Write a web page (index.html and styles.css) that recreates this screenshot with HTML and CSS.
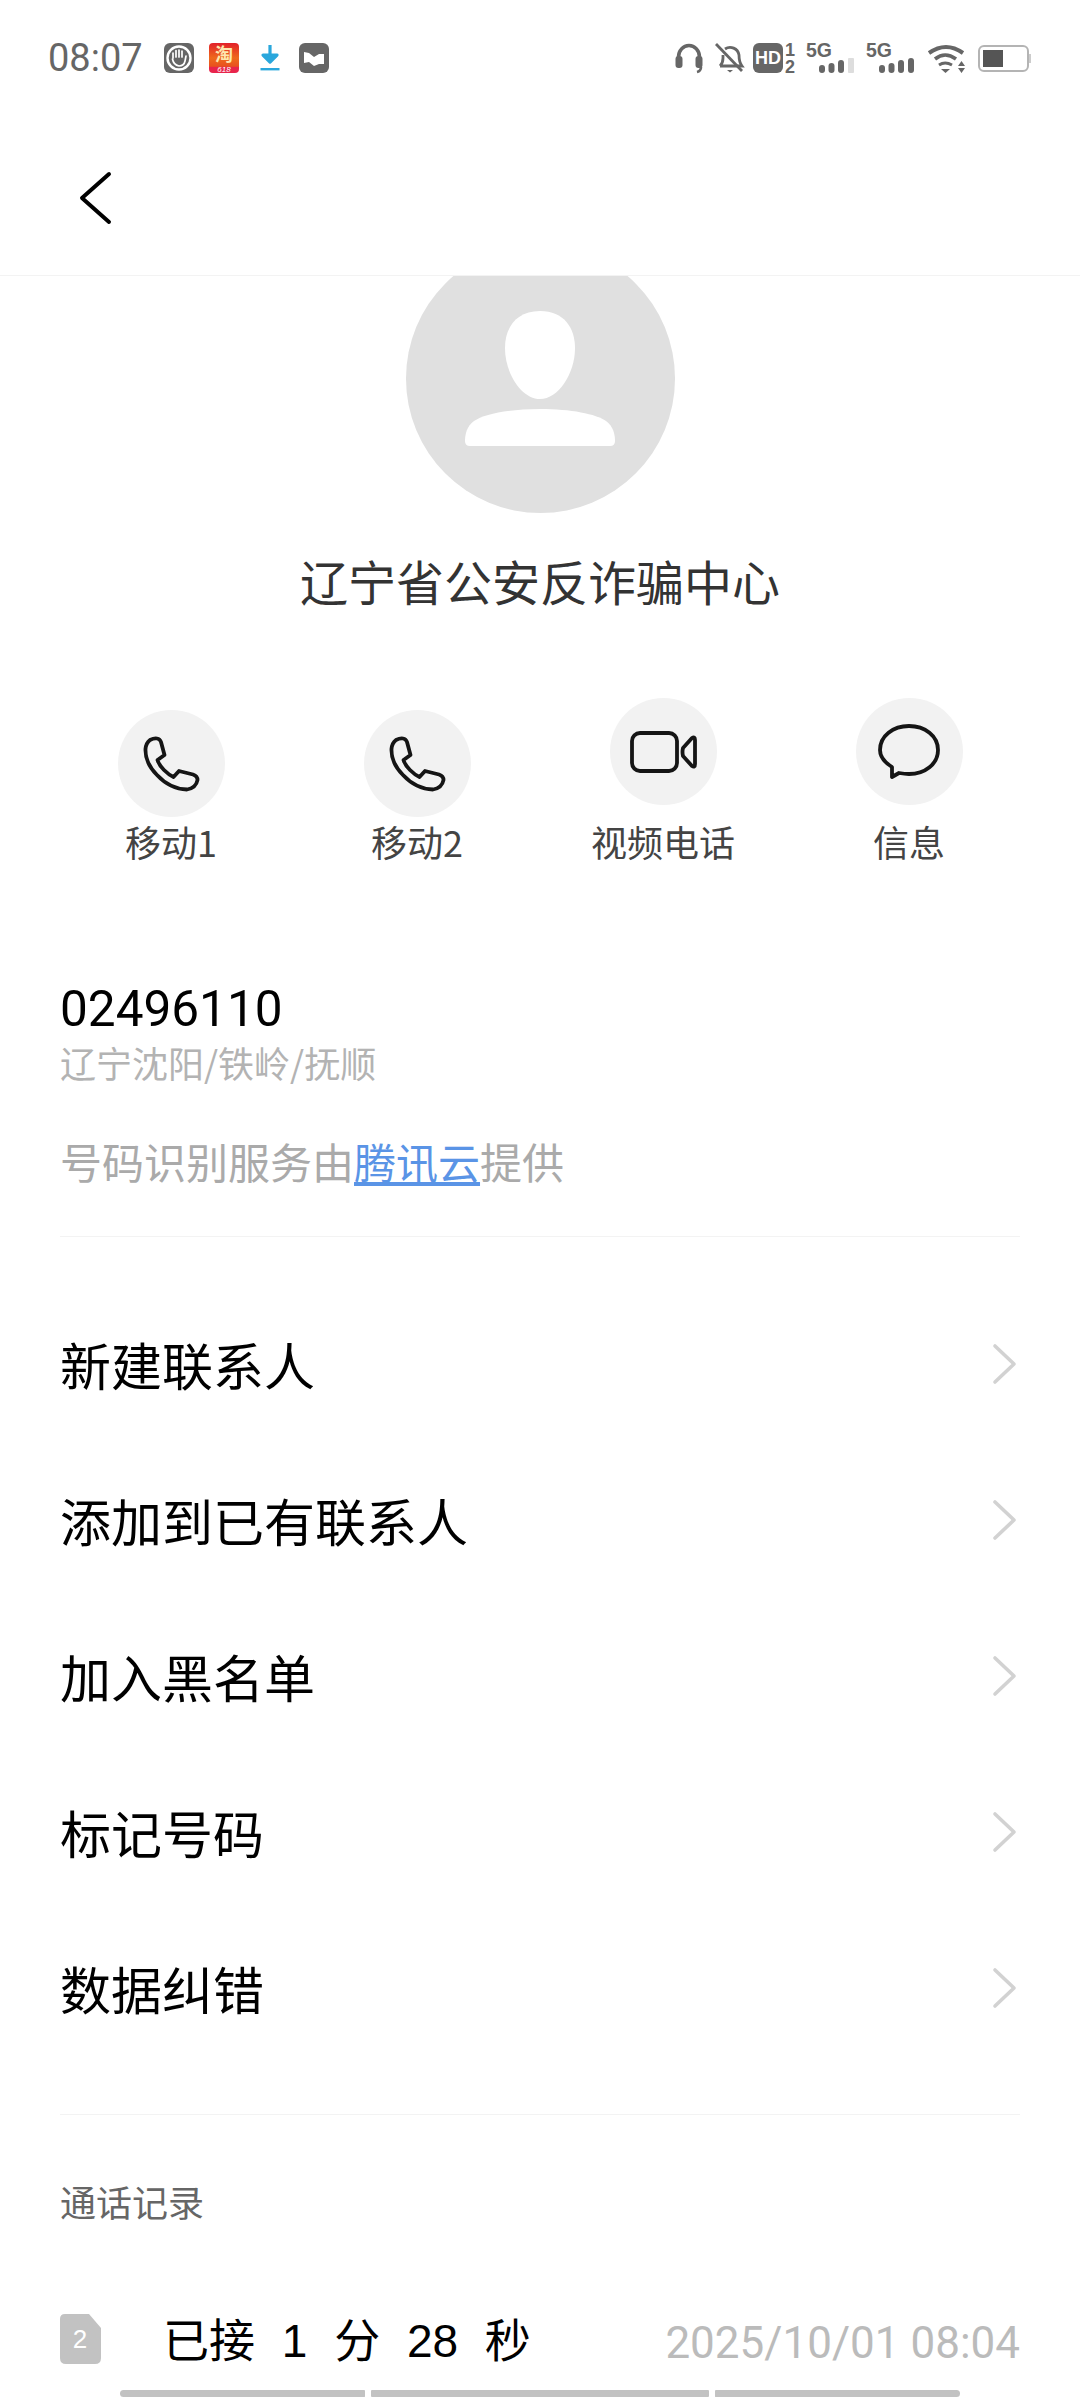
FILE: index.html
```html
<!DOCTYPE html>
<html lang="zh-CN">
<head>
<meta charset="utf-8">
<title>辽宁省公安反诈骗中心</title>
<link rel="stylesheet" href="styles.css">
</head>
<body>
<div class="page">
  <header class="top">
    <div class="status">
      <div class="status-left">
        <span class="time">08:07</span>
        <svg class="si si-a" viewBox="0 0 30 30"><rect width="30" height="30" rx="6" fill="#666"/><circle cx="15" cy="15" r="11.5" fill="none" stroke="#fff" stroke-width="2.4"/><path d="M9 15V10M12 14V7.5M15 14V7M18 14V8M8.5 16q1 6 6.5 7q5 0 6-5l1-5" fill="none" stroke="#fff" stroke-width="1.7" stroke-linecap="round"/></svg>
        <svg class="si si-b" viewBox="0 0 30 30"><defs><linearGradient id="tb" x1="0" y1="0" x2="0" y2="1"><stop offset="0" stop-color="#e2202a"/><stop offset=".5" stop-color="#ee6a1c"/><stop offset=".78" stop-color="#e8501f"/><stop offset=".8" stop-color="#e8244c"/><stop offset="1" stop-color="#e8244c"/></linearGradient></defs><rect width="30" height="30" rx="4" fill="url(#tb)"/><text x="15" y="18" class="tb-main">淘</text><text x="15" y="28.500" class="tb-sub">618</text></svg>
        <svg class="si si-c" viewBox="0 0 20 30"><path d="M10 2v14M3 12l7 7 7-7z" fill="#2aa7dc" stroke="#2aa7dc" stroke-width="3.2" stroke-linejoin="round"/><rect x="0.500" y="25" width="19" height="2.400" fill="#2aa7dc"/></svg>
        <svg class="si si-d" viewBox="0 0 30 30"><rect width="30" height="30" rx="6" fill="#666"/><path d="M5 9l5 1 5 4 5-3 5 0v10l-5 0-5 2-5-4-5 1z" fill="#fff"/></svg>
      </div>
      <div class="status-right">
        <svg class="sr sr-head" viewBox="0 0 40 30"><path d="M3.500 17V14a10.500 11.500 0 0 1 21 0v3" fill="none" stroke="#666" stroke-width="3.600"/><rect x="0.500" y="13" width="7" height="12" rx="3" fill="#666"/><rect x="20.500" y="13" width="7" height="12" rx="3" fill="#666"/><path d="M26 24q0 4-4 5" fill="none" stroke="#666" stroke-width="2.600"/></svg>
        <svg class="sr sr-bell" viewBox="0 0 38 30"><path d="M5 23q3-3 3-8V12M10 6a9 9 0 0 1 14 6q0 7 3 11H5" fill="none" stroke="#666" stroke-width="2.800"/><path d="M12 27h6l-3 2.500z" fill="#666"/><path d="M1 1L27 28" stroke="#666" stroke-width="2.800"/></svg>
        <svg class="sr sr-hd" viewBox="0 0 53 30"><rect y="0" width="30" height="30" rx="6" fill="#666"/><text x="15" y="21" class="t-hd">HD</text><text x="37" y="13" class="t-sim">1</text><text x="37" y="30" class="t-sim">2</text></svg>
        <svg class="sr sr-sig1" viewBox="0 0 60 30"><text x="0" y="14" class="t-5g">5G</text><rect x="13" y="22" width="6" height="8" rx="3" fill="#666"/><rect x="22.500" y="20" width="6" height="10" rx="3" fill="#666"/><rect x="32" y="17" width="6" height="13" rx="3" fill="#666"/><rect x="42" y="15" width="6" height="15" rx="1" fill="#ddd"/></svg>
        <svg class="sr sr-sig2" viewBox="0 0 61 30"><text x="0" y="14" class="t-5g">5G</text><rect x="13" y="22" width="6" height="8" rx="3" fill="#666"/><rect x="22.500" y="20" width="6" height="10" rx="3" fill="#666"/><rect x="32" y="17" width="6" height="13" rx="3" fill="#666"/><rect x="42" y="15" width="6" height="15" rx="3" fill="#666"/></svg>
        <svg class="sr sr-wifi" viewBox="0 0 51 30"><path d="M2 10Q19 -2 36 10" fill="none" stroke="#666" stroke-width="4"/><path d="M8 16Q18 8 29 16" fill="none" stroke="#666" stroke-width="3.600"/><path d="M12 22Q18 18 25 22" fill="none" stroke="#666" stroke-width="3"/><path d="M14 26h9l-4.500 4z" fill="#666"/><path d="M31 23l3.500-5 3.500 5zM31 25h7l-3.500 5z" fill="#666"/></svg>
        <svg class="sr sr-batt" viewBox="0 0 53 30"><rect x="1" y="3" width="49" height="25" rx="5" fill="#fff" stroke="#b4b4b4" stroke-width="2"/><rect x="5" y="7" width="20" height="17" fill="#555"/><rect x="51" y="11" width="2" height="9" fill="#ccc"/></svg>
      </div>
    </div>
    <div class="navbar">
      <svg class="back" viewBox="0 0 34 54"><path d="M30 3L3 27l27 24" fill="none" stroke="#000" stroke-width="4" stroke-linecap="round" stroke-linejoin="round"/></svg>
    </div>
  </header>

  <section class="hero">
    <div class="avatar-clip">
      <svg class="avatar" viewBox="0 0 269 269"><circle cx="134.500" cy="134.500" r="134.500" fill="#e0e0e0"/><path d="M134 67C158 67 169 84 169 104C169 130 152 155 134 155C116 155 99 130 99 104C99 84 110 67 134 67Z" fill="#fff"/><path d="M134 165C165 165 190 170 200 177C207 182 209 190 209 197Q209 202 204 202L64 202Q59 202 59 197C59 190 61 182 68 177C78 170 103 165 134 165Z" fill="#fff"/></svg>
    </div>
    <h1 class="name">辽宁省公安反诈骗中心</h1>
  </section>

  <nav class="actions">
    <div class="action">
      <div class="action-circle"><svg class="ic-phone" viewBox="0 0 55 54"><path d="M6 3Q10 1 13 1.500Q16 2 17 5L20.500 18L13.500 23Q15 28 20 33Q25 38 29.500 40L35 34L49 37.500Q53.500 39 53.500 43Q52 51 43 52.500Q26 52 13 38Q1 26 1.500 12Q2 6 6 3Z" class="ic-line"/></svg></div>
      <span class="action-label">移动1</span>
    </div>
    <div class="action">
      <div class="action-circle"><svg class="ic-phone" viewBox="0 0 55 54"><path d="M6 3Q10 1 13 1.500Q16 2 17 5L20.500 18L13.500 23Q15 28 20 33Q25 38 29.500 40L35 34L49 37.500Q53.500 39 53.500 43Q52 51 43 52.500Q26 52 13 38Q1 26 1.500 12Q2 6 6 3Z" class="ic-line"/></svg></div>
      <span class="action-label">移动2</span>
    </div>
    <div class="action action-high">
      <div class="action-circle"><svg class="ic-video" viewBox="0 0 66 42"><rect x="2" y="2" width="45" height="38" rx="8" class="ic-line"/><path d="M53 17L62 7Q65 5 65 9V33Q65 37 62 35L53 25Q52 21 53 17Z" class="ic-line"/></svg></div>
      <span class="action-label">视频电话</span>
    </div>
    <div class="action action-high">
      <div class="action-circle"><svg class="ic-msg" viewBox="0 0 62 60"><path d="M14 45C6 40 2 35 2 28C2 14 15 4 31 4C47 4 60 14 60 28C60 42 47 52 31 52C27 52 24 51.500 21 51L14 55Z" class="ic-line"/></svg></div>
      <span class="action-label">信息</span>
    </div>
  </nav>

  <section class="info">
    <div class="number">02496110</div>
    <div class="location">辽宁沈阳/铁岭/抚顺</div>
    <div class="provider">号码识别服务由<a class="link">腾讯云</a>提供</div>
  </section>

  <ul class="menu">
    <li class="menu-row"><span>新建联系人</span><svg class="chev" viewBox="0 0 24 40"><path d="M2 2l19 18L2 38" class="chev-line"/></svg></li>
    <li class="menu-row"><span>添加到已有联系人</span><svg class="chev" viewBox="0 0 24 40"><path d="M2 2l19 18L2 38" class="chev-line"/></svg></li>
    <li class="menu-row"><span>加入黑名单</span><svg class="chev" viewBox="0 0 24 40"><path d="M2 2l19 18L2 38" class="chev-line"/></svg></li>
    <li class="menu-row"><span>标记号码</span><svg class="chev" viewBox="0 0 24 40"><path d="M2 2l19 18L2 38" class="chev-line"/></svg></li>
    <li class="menu-row"><span>数据纠错</span><svg class="chev" viewBox="0 0 24 40"><path d="M2 2l19 18L2 38" class="chev-line"/></svg></li>
  </ul>

  <section class="log">
    <h2 class="log-title">通话记录</h2>
    <div class="log-row">
      <svg class="sim" viewBox="0 0 41 50"><path d="M5 0H29L41 14V44Q41 50 35 50H6Q0 50 0 44V5Q0 0 5 0Z" fill="#c2c2c2"/><text x="20" y="34" class="t-simno">2</text></svg>
      <span class="log-text">已接 1 分 28 秒</span>
      <span class="log-date">2025/10/01 08:04</span>
    </div>
  </section>

  <div class="scrollbars">
    <i class="bar bar-a"></i><i class="bar bar-b"></i><i class="bar bar-c"></i>
  </div>
</div>
</body>
</html>
```

FILE: styles.css
```css
* { box-sizing: border-box; }
html, body { margin: 0; padding: 0; background: #fff; }
body { font-family: "Noto Sans CJK SC", "Noto Sans", sans-serif; color: #000; }
.page { width: 1080px; height: 2400px; overflow: hidden; background: #fff; }
svg { overflow: visible; }

.top { height: 276px; border-bottom: 1px solid #f3f3f3; }
.status { height: 116px; padding: 43px 49px 0 48px; display: flex; justify-content: space-between; align-items: flex-start; }
.status-left { display: flex; align-items: center; height: 30px; }
.status-right { display: flex; align-items: center; height: 30px; }
.time { font-family: Roboto, sans-serif; font-size: 38px; line-height: 30px; color: #666; width: 116px; }
.si { height: 30px; display: block; }
.si-a, .si-b, .si-d { width: 30px; }
.si-b { margin-left: 15px; }
.si-c { width: 20px; margin-left: 21px; }
.si-d { margin-left: 19px; }
.sr { height: 30px; display: block; }
.sr-head { width: 40px; }
.sr-bell { width: 38px; }
.sr-hd { width: 53px; }
.sr-sig1 { width: 60px; }
.sr-sig2 { width: 61px; }
.sr-wifi { width: 51px; }
.sr-batt { width: 53px; }
.tb-main { font-family: "Noto Sans CJK SC", sans-serif; font-size: 18px; font-weight: 700; fill: #fde7b0; text-anchor: middle; }
.tb-sub { font-family: "Liberation Sans", sans-serif; font-size: 8px; font-style: italic; fill: #fff; text-anchor: middle; }
.t-hd { font-family: "Liberation Sans", sans-serif; font-size: 18px; font-weight: 700; fill: #fff; text-anchor: middle; }
.t-sim { font-family: "Liberation Sans", sans-serif; font-size: 18px; font-weight: 700; fill: #666; text-anchor: middle; }
.t-5g { font-family: "Liberation Sans", sans-serif; font-size: 19.5px; font-weight: 700; fill: #666; }
.navbar { height: 159px; padding: 55px 0 0 79px; }
.back { width: 34px; height: 54px; display: block; }

.hero { display: flex; flex-direction: column; align-items: center; }
.avatar-clip { width: 269px; height: 237px; overflow: hidden; }
.avatar { width: 269px; height: 269px; margin-top: -32px; display: block; }
.name { margin: 33px 0 0; font-size: 48px; font-weight: 400; line-height: 68px; color: #333; }

.actions { display: grid; grid-template-columns: repeat(4, 246px); padding: 0 48px; margin-top: 84px; }
.action { display: flex; flex-direction: column; align-items: center; padding-top: 12px; }
.action-high { padding-top: 0; }
.action-circle { width: 107px; height: 107px; border-radius: 50%; background: #f2f2f2; display: flex; align-items: center; justify-content: center; }
.action-label { font-size: 36px; line-height: 46px; color: #444; margin-top: 1px; }
.action-high .action-label { margin-top: 13px; }
.ic-phone { width: 55px; height: 54px; }
.ic-video { width: 66px; height: 42px; }
.ic-msg { width: 62px; height: 60px; }
.ic-line { fill: none; stroke: #151515; stroke-width: 3.8; stroke-linejoin: round; }

.info { padding: 0 60px; margin-top: 115px; }
.number { font-family: Roboto, sans-serif; font-size: 49.5px; line-height: 60px; color: #000; }
.location { font-size: 36px; line-height: 44px; color: #b3b3b3; margin-top: 1px; }
.provider { font-size: 42px; line-height: 56px; color: #aaa; margin-top: 49px; padding-bottom: 47px; border-bottom: 1px solid #f3f3f3; }
.link { color: #5a94e6; text-decoration: underline; }

.menu { list-style: none; margin: 49px 60px 0; padding: 0 0 48px; border-bottom: 1px solid #f3f3f3; }
.menu-row { height: 156px; display: flex; align-items: center; justify-content: space-between; font-size: 51px; color: #000; }
.chev { width: 24px; height: 40px; margin-right: 3px; display: block; }
.chev-line { fill: none; stroke: #d2d2d2; stroke-width: 3.6; stroke-linecap: round; stroke-linejoin: round; }

.log { padding: 0 60px; }
.log-title { margin: 62px 0 0; font-size: 36px; font-weight: 400; line-height: 48px; color: #666; }
.log-row { display: flex; align-items: center; margin-top: 89px; height: 50px; }
.sim { width: 41px; height: 50px; flex: none; display: block; }
.t-simno { font-family: "Liberation Sans", sans-serif; font-size: 26px; font-weight: 400; fill: #fff; text-anchor: middle; }
.log-text { font-family: "Liberation Sans", "Noto Sans CJK SC", sans-serif; font-size: 46px; margin-left: 62px; padding-bottom: 4px; white-space: pre; word-spacing: 14px; }
.log-date { font-family: Roboto, sans-serif; margin-left: auto; padding-top: 8px; font-size: 44px; color: #bbb; }

.scrollbars { display: flex; gap: 6px; padding-left: 120px; margin-top: 26px; }
.bar { display: block; height: 7px; background: #c2c2c2; }
.bar-a { width: 245px; border-radius: 4px 1px 1px 4px; }
.bar-b { width: 338px; border-radius: 1px; }
.bar-c { width: 245px; border-radius: 1px 4px 4px 1px; }
```
